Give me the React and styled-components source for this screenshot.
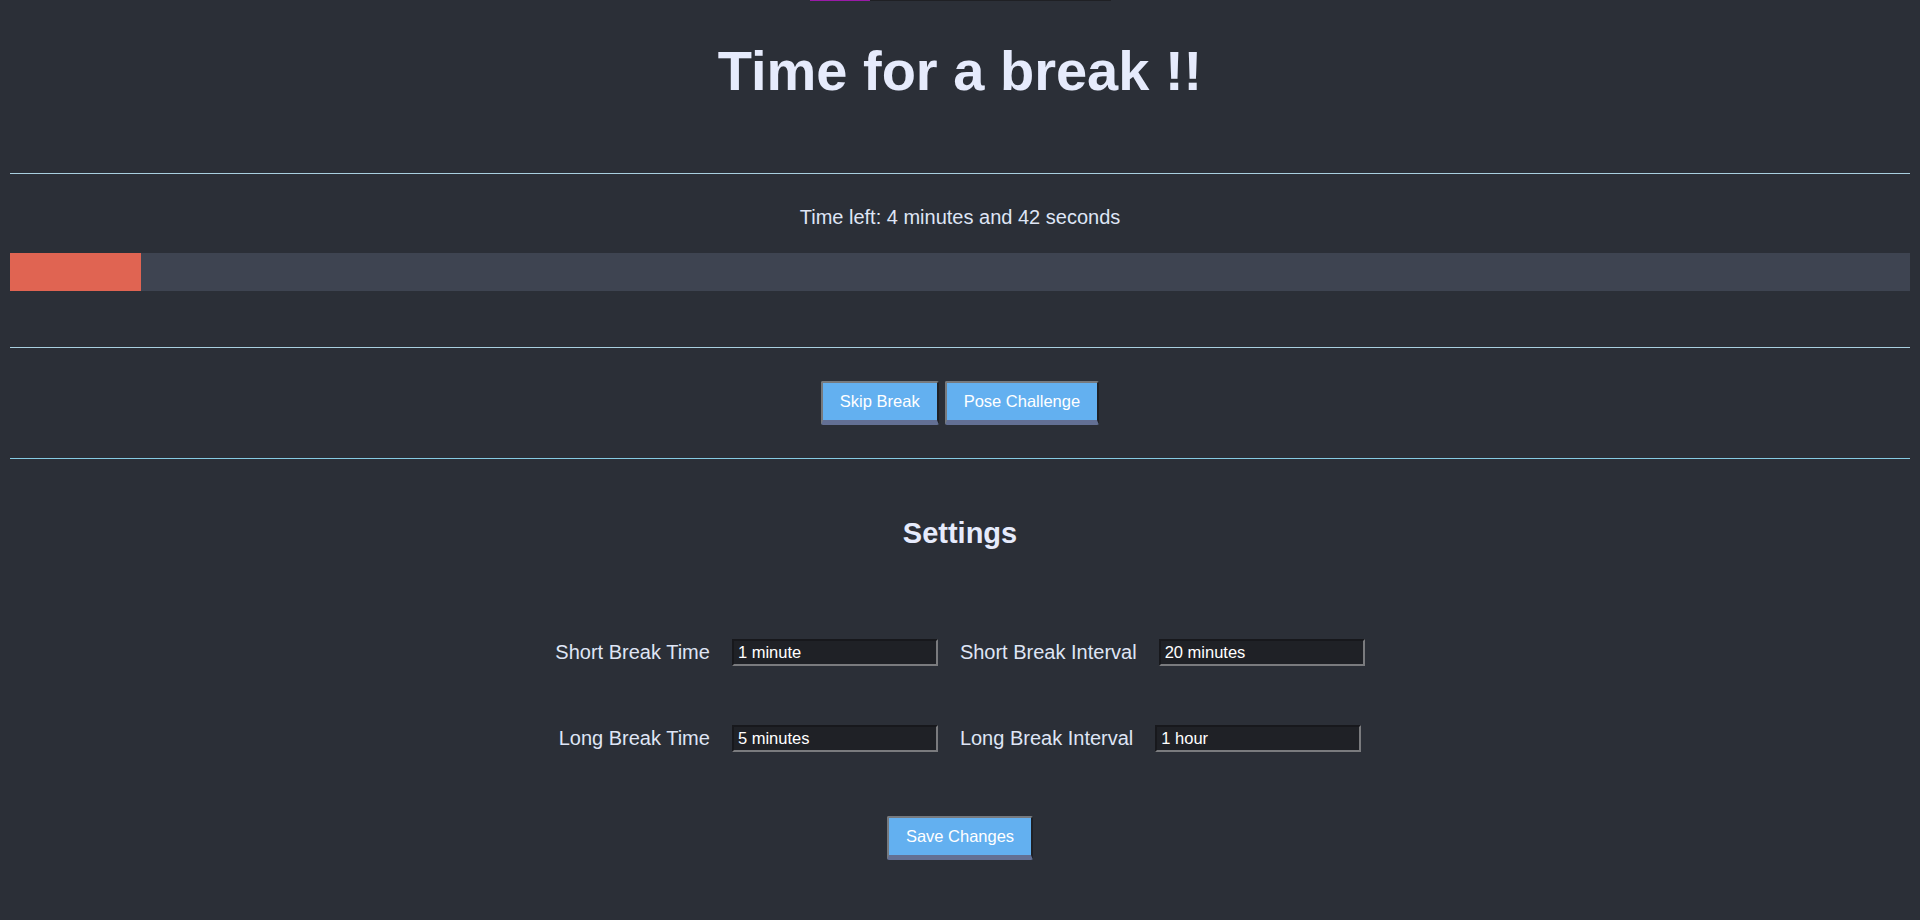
import React from "react"
import styled, { createGlobalStyle } from "styled-components"

const GlobalStyle = createGlobalStyle`
  html, body {
    margin: 0;
    padding: 0;
    background: #2b2f37;
    font-family: "Liberation Sans", Arial, sans-serif;
  }
`

const App = () => {
  return (
    <>
      <GlobalStyle />
      <Page>
        <TopStrip>
          <TopStripFill />
        </TopStrip>
        <Title>Time for a break !!</Title>
        <Divider $top={70} />
        <TimeLeft>Time left: 4 minutes and 42 seconds</TimeLeft>
        <Progress>
          <ProgressFill style={{ width: `${(131 / 1900) * 100}%` }} />
        </Progress>
        <Divider $top={56} />
        <ButtonRow>
          <Button>Skip Break</Button>
          <Button>Pose Challenge</Button>
        </ButtonRow>
        <Divider $top={33} $color="#86cbe3" />
        <SettingsTitle>Settings</SettingsTitle>
        <SettingsRow $top={89}>
          <Label>Short Break Time</Label>
          <Field defaultValue="1 minute" />
          <Label>Short Break Interval</Label>
          <Field defaultValue="20 minutes" />
        </SettingsRow>
        <SettingsRow $top={59}>
          <Label>Long Break Time</Label>
          <Field defaultValue="5 minutes" />
          <Label>Long Break Interval</Label>
          <Field defaultValue="1 hour" />
        </SettingsRow>
        <SaveRow>
          <Button>Save Changes</Button>
        </SaveRow>
      </Page>
    </>
  )
}

export default App

const Page = styled.div`
  padding: 0 10px 40px 10px;
`

const TopStrip = styled.div`
  width: 301px;
  height: 1px;
  margin: 0 auto;
  background: #1f2024;
  display: flex;
`

const TopStripFill = styled.div`
  width: 60px;
  background: #9a1aa8;
`

const Title = styled.h1`
  margin: 38px 0 0 0;
  text-align: center;
  font-size: 56px;
  line-height: 64px;
  font-weight: bold;
  color: #e6ebfc;
`

const Divider = styled.div`
  height: 1px;
  margin-top: ${(p) => p.$top}px;
  background: ${(p) => p.$color || "#a9cfdf"};
`

const TimeLeft = styled.p`
  margin: 32px 0 0 0;
  text-align: center;
  font-size: 20px;
  line-height: 23px;
  color: #dfe5f5;
`

const Progress = styled.div`
  margin-top: 24px;
  height: 38px;
  background: #3e4451;
  display: flex;
`

const ProgressFill = styled.div`
  background: #e06452;
`

const ButtonRow = styled.div`
  margin-top: 33px;
  display: flex;
  justify-content: center;
  gap: 6px;
`

const Button = styled.button`
  font-family: "Liberation Sans", Arial, sans-serif;
  font-size: 16.5px;
  line-height: 19px;
  color: #ffffff;
  background: #63b0f0;
  padding: 9px 17px;
  border-top: 2px solid #777a7e;
  border-left: 2px solid #777a7e;
  border-right: 2px solid #1f2126;
  border-bottom: 5px solid #637094;
  border-radius: 2px;
  cursor: pointer;

  &:hover {
    background: #72b8f2;
  }
`

const SettingsTitle = styled.h2`
  margin: 57px 0 0 0;
  text-align: center;
  font-size: 29px;
  line-height: 34px;
  font-weight: bold;
  color: #e6ebfc;
`

const SettingsRow = styled.div`
  margin-top: ${(p) => p.$top}px;
  display: flex;
  justify-content: center;
  align-items: center;
  gap: 22px;
`

const Label = styled.label`
  font-size: 20px;
  line-height: 23px;
  color: #dfe5f5;
`

const Field = styled.input`
  box-sizing: border-box;
  width: 206px;
  height: 27px;
  padding: 0 4px;
  font-family: "Liberation Sans", Arial, sans-serif;
  font-size: 16.5px;
  color: #ffffff;
  background: #1f2126;
  border-top: 2px solid #17181c;
  border-left: 2px solid #17181c;
  border-right: 2px solid #7a7b7e;
  border-bottom: 2px solid #7a7b7e;
  outline: none;
`

const SaveRow = styled.div`
  margin-top: 64px;
  display: flex;
  justify-content: center;
`
